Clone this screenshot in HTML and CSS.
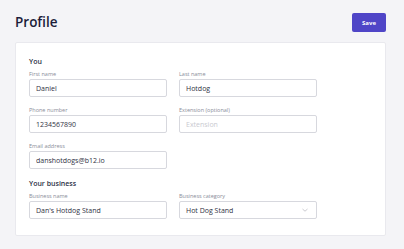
FILE: index.html
```html
<!DOCTYPE html>
<html lang="en">

<head>
  <meta charset="UTF-8" />
  <meta name="viewport" content="width=device-width, initial-scale=1.0" />
  <link rel="stylesheet" href="styles.css">
  <title>Profile</title>
</head>

<body>
  <div class="header">
    <h1 class="title">Profile</h1>
    <button class="save">Save</button>
  </div>

  <div class="card">
    <h2 class="section">You</h2>
    <div class="grid">
      <label class="field">
        <span class="label">First name</span>
        <input class="input" type="text" value="Daniel">
      </label>
      <label class="field">
        <span class="label">Last name</span>
        <input class="input" type="text" value="Hotdog">
      </label>
      <label class="field">
        <span class="label">Phone number</span>
        <input class="input" type="text" value="1234567890">
      </label>
      <label class="field">
        <span class="label">Extension (optional)</span>
        <input class="input" type="text" placeholder="Extension">
      </label>
      <label class="field">
        <span class="label">Email address</span>
        <input class="input" type="text" value="danshotdogs@b12.io">
      </label>
    </div>

    <h2 class="section spaced">Your business</h2>
    <div class="grid">
      <label class="field">
        <span class="label">Business name</span>
        <input class="input" type="text" value="Dan's Hotdog Stand">
      </label>
      <label class="field">
        <span class="label">Business category</span>
        <div class="select">
          <span>Hot Dog Stand</span>
          <svg class="chevron" width="6" height="4" viewBox="0 0 6 4">
            <path d="M0.5 1 L3 3.2 L5.5 1" fill="none" stroke="#b4b4bc" stroke-width="0.7" />
          </svg>
        </div>
      </label>
    </div>
  </div>
</body>

</html>
```

FILE: styles.css
```css
*,
*::after,
*::before {
  box-sizing: border-box;
  font-family: "Open Sans", "Noto Sans", sans-serif;
}

body {
  background-color: #f4f4f7;
  margin: 0;
  padding: 13px 18px 0 15px;
  color: #2b2f45;
}

.header {
  display: flex;
  justify-content: space-between;
  align-items: center;
  height: 19px;
  margin-bottom: 10px;
}

.title {
  margin: 0;
  font-size: 13.5px;
  font-weight: 600;
  color: #1c1d3a;
  line-height: 19px;
}

.save {
  width: 34px;
  height: 19px;
  border: none;
  border-radius: 2px;
  padding: 0;
  background-color: #4f45c7;
  color: white;
  font-size: 6px;
  font-weight: 700;
  cursor: pointer;
}

.card {
  background-color: white;
  border: 1px solid #e9e9ee;
  border-radius: 2px;
  padding: 13px 13px 13px 13px;
  height: 194px;
}

.section {
  margin: 0 0 3px;
  font-size: 7px;
  line-height: 11px;
  font-weight: 600;
  color: #2b2f45;
}

.section.spaced {
  margin-top: 9px;
}

.grid {
  display: grid;
  grid-template-columns: repeat(2, 138px);
  column-gap: 12px;
  row-gap: 9px;
}

.field {
  display: flex;
  flex-direction: column;
}

.label {
  font-size: 5.5px;
  line-height: 8px;
  color: #8a8d99;
  margin-bottom: 1px;
}

.input,
.select {
  height: 18px;
  border: 1px solid #d7d8de;
  border-radius: 2px;
  padding: 0 6px;
  font-size: 7px;
  color: #30323f;
  background-color: white;
  outline: none;
}

.input::placeholder {
  color: #c9cad0;
}

.select {
  display: flex;
  align-items: center;
  justify-content: space-between;
}

.chevron {
  margin-right: 2px;
}
```
